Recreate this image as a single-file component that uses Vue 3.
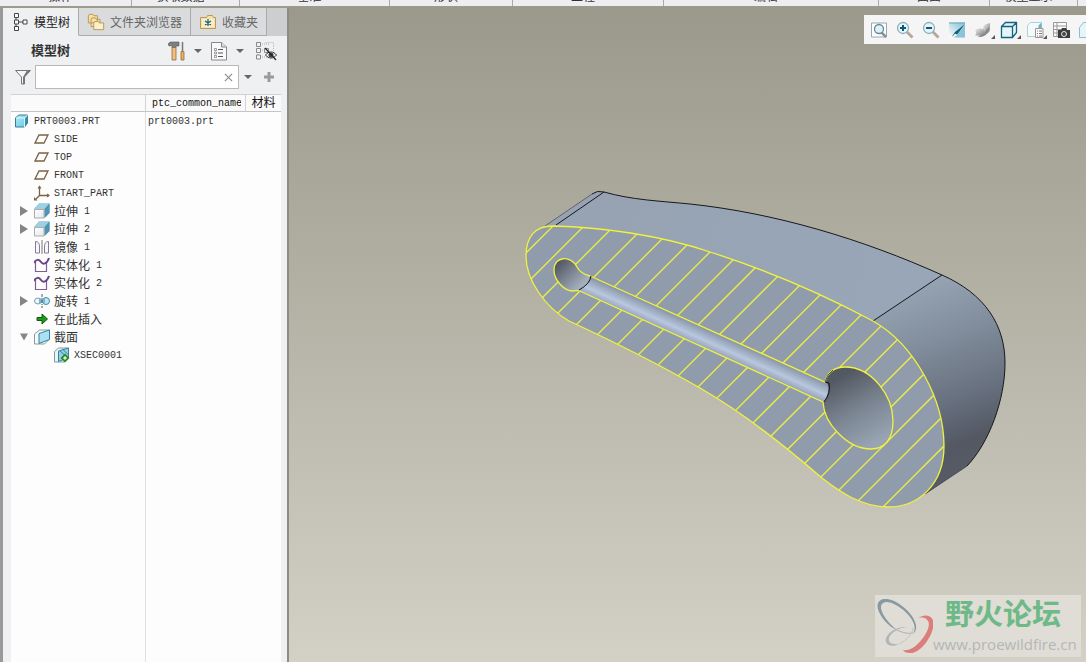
<template>
  <div class="app">
    <!-- Shared icon sprite -->
    <svg class="sprite" width="0" height="0" aria-hidden="true">
      <defs>
        <linearGradient id="g-cube" x1="0" y1="0" x2="1" y2="1">
          <stop offset="0" stop-color="#b4ecfa" />
          <stop offset="1" stop-color="#63c6e4" />
        </linearGradient>
        <linearGradient id="g-face" x1="0" y1="0" x2="1" y2="1">
          <stop offset="0" stop-color="#ffffff" />
          <stop offset="1" stop-color="#dfe9ee" />
        </linearGradient>
        <linearGradient id="g-steel" x1="0" y1="0" x2="1" y2="1">
          <stop offset="0" stop-color="#f2f2f2" />
          <stop offset="1" stop-color="#777777" />
        </linearGradient>
        <linearGradient id="g-repaint" x1="0" y1="1" x2="1" y2="0">
          <stop offset="0" stop-color="#ffffff" />
          <stop offset="1" stop-color="#7fbdd3" />
        </linearGradient>
      </defs>
      <symbol id="i-part" viewBox="0 0 16 16">
        <path d="M1.500 5l3-3h9v8l-3 4h-9z" fill="url(#g-cube)" stroke="#3d7c94" />
        <path d="M2 5h8.500v9M10.500 5l3-3" fill="none" stroke="#d9f6ff" />
        <path d="M11 5.500L13.500 3v7L11 13.500z" fill="#348cab" />
      </symbol>
      <symbol id="i-plane" viewBox="0 0 16 16">
        <path d="M5 4h9l-4 8H1z" fill="none" stroke="#7a6242" stroke-width="1.300" />
      </symbol>
      <symbol id="i-csys" viewBox="0 0 16 16">
        <path d="M5.500 1v9.500H15M5.500 10.500l-4 4" fill="none" stroke="#7a6242" stroke-width="1.300" />
        <path d="M3.500 3.500l2-3 2 3zM13 8.500l3 2-3 2zM0 12v3.500h3.500z" fill="#7a6242" />
      </symbol>
      <symbol id="i-extrude" viewBox="0 0 16 16">
        <path d="M0 6l5-5.500h10.500v9.500L10.500 15V6z" fill="#65aecb" />
        <path d="M0 6l5-5.500h10.500L10.500 6z" fill="#9ed0e3" />
        <path d="M10.500 6l5-5.500v9.500l-5 5z" fill="#4f94b3" />
        <path d="M.5 6.500H10v8.500H.5z" fill="url(#g-face)" stroke="#b4a8a4" />
      </symbol>
      <symbol id="i-mirror" viewBox="0 0 16 16">
        <path d="M1.500 2.500c3 0 4 2 4 5.500v6h-4zM14.500 2.500c-3 0-4 2-4 5.500v6h4z" fill="#faf7fc" stroke="#8b789d" />
        <path d="M8 1v14" stroke="#777" />
      </symbol>
      <symbol id="i-solid" viewBox="0 0 16 16">
        <path d="M1.500 5v9.500h11V5" fill="none" stroke="#7e5e94" stroke-width="1.200" />
        <path d="M0 6c2-4 5-4 7-1s6 2 8-4" fill="none" stroke="#69438a" stroke-width="2" />
      </symbol>
      <symbol id="i-revolve" viewBox="0 0 16 16">
        <ellipse cx="4" cy="8" rx="3.500" ry="3" fill="#e9f6fb" stroke="#819ca8" />
        <ellipse cx="12" cy="8" rx="3.500" ry="3.500" fill="#bfe6f4" stroke="#3f8aa8" />
        <path d="M5 6h6v4H5z" fill="#75b7d0" />
        <path d="M8 1v14" stroke="#555" stroke-dasharray="3 1 1 1" />
      </symbol>
      <symbol id="i-insert" viewBox="0 0 16 16">
        <path d="M3 6.500h5V3l5.500 5L8 13V9.500H3z" fill="#1c9a16" stroke="#0c5c0b" />
      </symbol>
      <symbol id="i-section" viewBox="0 0 16 16">
        <path d="M.5 5l5-4h10v9l-5 5H.5z" fill="#f6f9fa" stroke="#8d9ca3" />
        <path d="M5 4.500l10.500-3.500v9.500L5 14.500z" fill="#a9e1f3" stroke="#39809d" />
      </symbol>
      <symbol id="i-xsec" viewBox="0 0 16 16">
        <path d="M.5 4.500l4-3.500h10v9l-4 5H.5z" fill="#eaf5f8" stroke="#7f9ba7" />
        <path d="M4.500 4l10-3v9.500l-10 4z" fill="#8fd2e8" stroke="#3d7f98" />
        <path d="M6 4l7 6M9 2.500l5 5" stroke="#3d7f98" />
        <path d="M11 6.500l4.500 4.500-4.500 4.500L6.500 11z" fill="#2a8a2a" />
        <path d="M11 9l2 2-2 2-2-2z" fill="#e3f3cf" />
      </symbol>
      <symbol id="i-tree" viewBox="0 0 16 20">
        <path d="M4 5v10M6 10h5" stroke="#444" />
        <path d="M2.500 1.500h4v4h-4zM2.500 8h4v4h-4zM2.500 14.500h4v4h-4zM11 8h4v4h-4z" fill="#fff" stroke="#444" />
      </symbol>
      <symbol id="i-folders" viewBox="0 0 20 20">
        <path d="M1.500 3.500l1-2h4l1 1.500h4v8h-10zM4.500 7.500l1-2h4l1 1.500h4v8h-10z" fill="#f8dfa4" stroke="#b3944f" />
        <path d="M7.500 11.500l1-2h4l1 1.500h5v7.500h-11z" fill="#fdefcb" stroke="#b3944f" />
      </symbol>
      <symbol id="i-fav" viewBox="0 0 18 18">
        <path d="M1.500 4.500h6l1-2h5l1 2h2v11h-15z" fill="#f8e0a6" stroke="#b79a59" />
        <path d="M3 6h12v8H3z" fill="#fbedc9" />
        <path d="M9 6v7M6 8l6 4M12 8l-6 4" stroke="#13647c" stroke-width="1.300" />
      </symbol>
      <symbol id="i-tools" viewBox="0 0 18 20">
        <path d="M0 3l2-2h9v4H8v2H4V4.500L1 5z" fill="#7b8084" stroke="#54585b" stroke-width=".6" />
        <path d="M4 6.500h4V19H4z" fill="#edbf82" stroke="#9a6b32" stroke-width=".8" />
        <path d="M14.500 1v9" stroke="#777" stroke-width="1.500" />
        <path d="M13 10.500h3V19h-3z" fill="#e6b06a" stroke="#9a6b32" stroke-width=".8" />
      </symbol>
      <symbol id="i-list" viewBox="0 0 18 20">
        <path d="M1.500 1.500h10l5 4.500v13h-15z" fill="#fafafa" stroke="#888" />
        <path d="M11.500 1.500V6h5" fill="#ddd" stroke="#888" />
        <path d="M8 8.500h5M8 12h5M8 15.500h5" stroke="#555" />
        <path d="M4.500 7.500h2v2h-2zM4.500 11h2v2h-2zM4.500 14.500h2v2h-2z" fill="none" stroke="#777" stroke-width=".7" />
      </symbol>
      <symbol id="i-hide" viewBox="0 0 22 20">
        <path d="M5 3h9M5 9h9M5 16h9M3 3v13" stroke="#aaa" stroke-dasharray="1 1" />
        <path d="M1.500 1.500h4v4h-4zM1.500 7.500h4v4h-4zM1.500 14h4v4h-4zM9.500 7.500h4v4h-4z" fill="#f3f3f3" stroke="#888" />
        <path d="M10.500 1.500h8v4M18.500 5v7" fill="none" stroke="#bbb" stroke-dasharray="1 1" />
        <path d="M10.500 14c3-4 8-4 11 0-3 4-8 4-11 0z" fill="#eee" stroke="#333" />
        <circle cx="16" cy="14" r="2.500" fill="#444" />
        <path d="M10 7l11 12" stroke="#222" stroke-width="1.200" />
      </symbol>
      <symbol id="i-funnel" viewBox="0 0 18 16">
        <path d="M1.500 1.500h15L10.500 8v7h-3V8z" fill="#f7f7f7" stroke="#777" />
        <path d="M10.500 8l6-6.500H13L9 8v7h1.500z" fill="#777" />
      </symbol>
      <symbol id="v-refit" viewBox="0 0 18 18">
        <path d="M1.500 2h15v14h-15z" fill="#fff" stroke="#9aa8ae" />
        <path d="M11 11l5 5" stroke="#8b9194" stroke-width="2.500" />
        <circle cx="9" cy="8" r="4.500" fill="#dff1f7" stroke="#5e8b9c" stroke-width="1.300" />
      </symbol>
      <symbol id="v-zoomin" viewBox="0 0 18 18">
        <path d="M10.500 10.500l6 6" stroke="#b3a89c" stroke-width="2.800" />
        <circle cx="7" cy="7" r="5.500" fill="#e5f5fa" stroke="#8fb0bc" stroke-width="1.300" />
        <path d="M4 7h6M7 4v6" stroke="#0d5876" stroke-width="2" />
      </symbol>
      <symbol id="v-zoomout" viewBox="0 0 18 18">
        <path d="M10.500 10.500l6 6" stroke="#b3a89c" stroke-width="2.800" />
        <circle cx="7" cy="7" r="5.500" fill="#e5f5fa" stroke="#8fb0bc" stroke-width="1.300" />
        <path d="M4 7h6" stroke="#0d5876" stroke-width="2" />
      </symbol>
      <symbol id="v-repaint" viewBox="0 0 18 18">
        <path d="M1 1.500h16v15H1z" fill="url(#g-repaint)" />
        <path d="M1 2h16" stroke="#6ba7bf" />
        <path d="M6 16.500l11-11v11z" fill="#8cc3d8" />
        <path d="M4 15.500l3-4.500 9.500-7.500-6.500 9z" fill="#145f7d" />
        <path d="M4 16.500l3-4 2 2z" fill="#eef6f9" />
      </symbol>
      <symbol id="v-shade" viewBox="0 0 18 18">
        <path d="M9 8c0-3 2-5 7-6v6c0 4-4 5-6 6z" fill="url(#g-steel)" />
        <path d="M1 9c3-2 7-2 9 0s0 6-3 6c-3-1-6 0-6-1 2-1 1-3 0-5z" fill="url(#g-steel)" />
        <path d="M3 15c4 0 8-2 9-6l3-3c0 6-4 10-9 10z" fill="#888" />
      </symbol>
      <symbol id="v-box" viewBox="0 0 18 18">
        <path d="M1.500 5.500l4-4h11v10l-4 5h-11zM1.500 5.500h11v11M12.500 5.500l4-4" fill="#e5f6fb" stroke="#17637f" stroke-width="1.300" />
      </symbol>
      <symbol id="v-saved" viewBox="0 0 18 18">
        <path d="M1.500 4.500l3-3h11v11l-3 3h-11z" fill="#f3fafc" stroke="#b5ced6" />
        <path d="M12.500 4.500l3-3v8h-3z" fill="#63b4cf" />
        <path d="M9.500 7.500h7.500v9H9.500z" fill="#fff" stroke="#9a958c" />
        <path d="M11 10h1M13 10h3M11 12.500h1M13 12.500h3M11 15h1M13 15h3" stroke="#777" />
      </symbol>
      <symbol id="v-manager" viewBox="0 0 18 18">
        <path d="M1.500 1.500h13v14h-13zM1.500 5h13M1.500 8.500h13M1.500 12h13M5 1.500v14" fill="#fafafa" stroke="#999" />
        <path d="M6 9h3l1-2h4l1 2h3v8H6z" fill="#3d3d3d" />
        <circle cx="12" cy="13" r="2.500" fill="#444" stroke="#e8e8e8" />
      </symbol>
      <symbol id="v-display" viewBox="0 0 18 18">
        <path d="M1.500 6.500l4-5h12v10l-4 5h-12z" fill="#e6f5fa" stroke="#8fbccb" />
      </symbol>
    </svg>

    <!-- Ribbon group captions -->
    <header class="ribbon">
      <span v-for="group in ribbonGroups" :key="group" class="ribbon-group">
        <span>{{ group }}</span>
      </span>
      <span></span>
    </header>

    <main class="workspace">
      <aside class="navigator">
        <nav class="tabs">
          <button
            v-for="tab in tabs"
            :key="tab.label"
            type="button"
            class="tab"
            :class="{ active: tab.label === activeTab }"
            @click="activeTab = tab.label"
          >
            <svg class="tab-icon"><use :href="'#' + tab.icon" /></svg>
            <span>{{ tab.label }}</span>
          </button>
        </nav>

        <div class="panel-header">
          <h1>模型树</h1>
          <button type="button" class="tool" aria-label="设置">
            <svg class="tool-icon"><use href="#i-tools" /></svg>
            <span class="caret"></span>
          </button>
          <button type="button" class="tool" aria-label="显示">
            <svg class="tool-icon"><use href="#i-list" /></svg>
            <span class="caret"></span>
          </button>
          <button type="button" class="tool" aria-label="隐藏">
            <svg class="hide-icon"><use href="#i-hide" /></svg>
          </button>
        </div>

        <div class="search-row">
          <svg class="funnel"><use href="#i-funnel" /></svg>
          <div class="search-box">
            <input v-model="query" type="text" aria-label="搜索模型树" />
            <button type="button" class="clear" aria-label="清除" @click="query = ''">
              <svg viewBox="0 0 10 10"><path d="M1 1l8 8M9 1L1 9" stroke="#8c8c8c" stroke-width="1.300" /></svg>
            </button>
          </div>
          <button type="button" class="plain" aria-label="搜索选项"><span class="caret"></span></button>
          <button type="button" class="plain" aria-label="添加">
            <svg class="plus" viewBox="0 0 12 12"><path d="M6 1v10M1 6h10" stroke="#9a9a9a" stroke-width="3" /></svg>
          </button>
        </div>

        <div class="tree-wrap">
          <table class="tree">
            <colgroup>
              <col class="col-tree" />
              <col class="col-name" />
              <col class="col-material" />
            </colgroup>
            <thead>
              <tr>
                <th></th>
                <th class="head-name"><div class="latin">ptc_common_name</div></th>
                <th class="head-material">材料</th>
              </tr>
            </thead>
            <tbody>
              <tr v-for="row in rows" :key="row.text + row.num">
                <td>
                  <div class="node" :class="'level-' + row.level">
                    <button
                      v-if="row.toggle"
                      type="button"
                      class="toggle"
                      :class="row.toggle"
                      :aria-label="row.text"
                    ></button>
                    <svg class="node-icon"><use :href="'#i-' + row.icon" /></svg>
                    <span :class="{ latin: row.latin }">{{ row.text }}</span>
                    <span v-if="row.num" class="latin num">{{ row.num }}</span>
                  </div>
                </td>
                <td class="latin value">{{ row.name }}</td>
                <td></td>
              </tr>
              <tr class="filler">
                <td></td>
                <td></td>
                <td></td>
              </tr>
            </tbody>
          </table>
        </div>
      </aside>

      <section class="viewport">
        <svg class="model" viewBox="289 7 797 655" preserveAspectRatio="xMinYMin meet">
          <defs>
            <linearGradient id="g-top" gradientUnits="userSpaceOnUse" x1="600" y1="200" x2="900" y2="300">
              <stop offset="0" stop-color="#97a3b3" />
              <stop offset="1" stop-color="#98a6b7" />
            </linearGradient>
            <linearGradient id="g-end" gradientUnits="userSpaceOnUse" x1="915" y1="290" x2="980" y2="455">
              <stop offset="0" stop-color="#94a2b2" />
              <stop offset=".3" stop-color="#828e9d" />
              <stop offset=".65" stop-color="#687180" />
              <stop offset=".9" stop-color="#535863" />
              <stop offset="1" stop-color="#555a64" />
            </linearGradient>
            <linearGradient id="g-rod" gradientUnits="userSpaceOnUse" x1="700" y1="325" x2="691" y2="345">
              <stop offset="0" stop-color="#8491a3" />
              <stop offset=".55" stop-color="#b9c7df" />
              <stop offset="1" stop-color="#8895a9" />
            </linearGradient>
            <linearGradient id="g-hole" gradientUnits="userSpaceOnUse" x1="838" y1="378" x2="875" y2="445">
              <stop offset="0" stop-color="#535962" />
              <stop offset=".5" stop-color="#7b8592" />
              <stop offset="1" stop-color="#99a5b5" />
            </linearGradient>
            <linearGradient id="g-small" gradientUnits="userSpaceOnUse" x1="558" y1="261" x2="582" y2="284">
              <stop offset="0" stop-color="#50555f" />
              <stop offset="1" stop-color="#a3aebd" />
            </linearGradient>
            <clipPath id="c-section">
              <path :d="sectionPath + pocketPath" clip-rule="evenodd" />
            </clipPath>
          </defs>

          <!-- Extruded body behind the section face -->
          <path
            d="M545 227L592 194Q597 190 604 192C632 200 660 201 690 204C775 213 862 239 942 275L873 322L800 310L640 260z"
            fill="url(#g-top)"
          />
          <path
            d="M942 275C985 294 1005 325 1005 363C1005 400 989 443 967 466L925 494L850 480L873 321z"
            fill="url(#g-end)"
          />
          <path
            d="M592 194Q597 190 604 192C632 200 660 201 690 204C775 213 862 239 942 275C985 294 1005 325 1005 363C1005 400 989 443 967 466M556 225L604 192M873 321L942 275"
            fill="none"
            stroke="#15181c"
          />
          <path d="M545 226L592 194" stroke="#5c6470" />
          <path d="M967 466L925 494" stroke="#484c55" />

          <!-- Section face, pockets and hatching -->
          <path :d="sectionPath" fill="#909cab" />
          <path :d="holePath" fill="url(#g-hole)" />
          <path d="M590 276L826 382Q832 388 824 402L579 291z" fill="url(#g-rod)" />
          <path :d="smallPath" fill="url(#g-small)" />
          <g clip-path="url(#c-section)" stroke="#ecee42" stroke-width="1.300">
            <line
              v-for="sum in hatchSums"
              :key="sum"
              :x1="sum - 180"
              y1="180"
              :x2="sum - 520"
              y2="520"
            />
          </g>
          <path :d="sectionPath + pocketPath" fill="none" stroke="#f0f23c" stroke-width="1.300" />
          <path d="M591 276Q590 284 579 290M825 382L829 383Q831 393 824 402" fill="none" stroke="#111" />
          <path d="M825 382Q827 374 833 370" fill="none" stroke="#55572c" />
        </svg>

        <div class="view-tools">
          <button
            v-for="tool in viewTools"
            :key="tool.icon"
            type="button"
            class="view-tool"
            :class="{ more: tool.more }"
            :aria-label="tool.label"
          >
            <svg><use :href="'#v-' + tool.icon" /></svg>
          </button>
        </div>

        <div class="watermark">
          <svg class="logo" viewBox="0 0 58 62">
            <path d="M22 35C12 31 2 18 2.500 10C4 1 17 3 27 11C38 19 46 33 38 39C43 31 36 21 27 14C18 7 8 4 6 11C5 17 13 28 22 35z" fill="#8999a3" />
            <path d="M22 35C28 38 34 39 38 38" fill="none" stroke="#a9b1b4" />
            <path d="M43 23C52 17 61 22 58 33C55 46 43 59 35 58C31 58 29 57 28 55C38 57 49 44 53 34C56 26 51 21 43 23z" fill="#da7d7b" />
            <path d="M32 32C20 31 9 40 11 47C12 51 19 52 24 49C16 50 13 47 14 43C16 37 24 33 32 32z" fill="#b1b6b5" />
            <path d="M24 49C32 45 38 38 38 33" fill="none" stroke="#c3c5c1" />
          </svg>
          <div class="watermark-text">
            <strong>野火论坛</strong>
            <span>www.proewildfire.cn</span>
          </div>
        </div>
      </section>
    </main>
  </div>
</template>

<script setup>
import { ref } from 'vue'

const ribbonGroups = ['操作', '获取数据', '基准', '形状', '工程', '编辑', '曲面', '模型显示']

const tabs = [
  { label: '模型树', icon: 'i-tree' },
  { label: '文件夹浏览器', icon: 'i-folders' },
  { label: '收藏夹', icon: 'i-fav' },
]
const activeTab = ref('模型树')
const query = ref('')

// Model tree, already flattened for display
const rows = [
  { level: 0, icon: 'part', text: 'PRT0003.PRT', latin: true, name: 'prt0003.prt' },
  { level: 1, icon: 'plane', text: 'SIDE', latin: true },
  { level: 1, icon: 'plane', text: 'TOP', latin: true },
  { level: 1, icon: 'plane', text: 'FRONT', latin: true },
  { level: 1, icon: 'csys', text: 'START_PART', latin: true },
  { level: 1, icon: 'extrude', text: '拉伸', num: 1, toggle: 'closed' },
  { level: 1, icon: 'extrude', text: '拉伸', num: 2, toggle: 'closed' },
  { level: 1, icon: 'mirror', text: '镜像', num: 1 },
  { level: 1, icon: 'solid', text: '实体化', num: 1 },
  { level: 1, icon: 'solid', text: '实体化', num: 2 },
  { level: 1, icon: 'revolve', text: '旋转', num: 1, toggle: 'closed' },
  { level: 1, icon: 'insert', text: '在此插入' },
  { level: 1, icon: 'section', text: '截面', toggle: 'open' },
  { level: 2, icon: 'xsec', text: 'XSEC0001', latin: true },
]

const viewTools = [
  { icon: 'refit', label: '重新调整' },
  { icon: 'zoomin', label: '放大' },
  { icon: 'zoomout', label: '缩小' },
  { icon: 'repaint', label: '重画' },
  { icon: 'shade', label: '渲染', more: true },
  { icon: 'box', label: '显示样式', more: true },
  { icon: 'saved', label: '已保存方向', more: true },
  { icon: 'manager', label: '视图管理器' },
  { icon: 'display', label: '基准显示' },
]

const sectionPath =
  'M553 226C600 227 660 235 710 252C770 271 830 298 873 321C915 345 944 400 944 446' +
  'C944 485 918 507 888 507C862 507 840 492 822 478C785 446 742 412 700 388' +
  'C660 365 610 340 569 321C545 307 526 280 526 256C526 238 534 226 553 226z'
const holePath =
  'M825 382C828 371 835 367 845 367C872 367 893 396 893 421C893 439 885 449 871 449' +
  'C848 449 824 424 823 402z'
const smallPath =
  'M590 276C582 274 579 271 577 267C571 255 554 256 554 270C554 280 564 291 573 291L579 290Q589 284 590 276z'
// Both bores and the rod channel as one opening
const pocketPath =
  'M590 276L825 382C828 371 835 367 845 367C872 367 893 396 893 421C893 439 885 449 871 449' +
  'C848 449 824 424 823 402L582 292Q578 290 573 291C564 291 554 280 554 270C554 256 571 255 577 267C579 271 582 274 590 276z'

// 45 degree hatch: every line keeps x + y constant
const hatchSums = Array.from({ length: 21 }, (_, i) => Math.round(1390 - i * 30.55))
</script>

<style>
html,
body {
  margin: 0;
  overflow: hidden;
}
</style>

<style scoped>
.app {
  display: flex;
  flex-direction: column;
  height: 100vh;
  font-family: "Liberation Sans", "Noto Sans CJK SC", sans-serif;
  font-size: 12px;
  color: #333;
  background: #9b9b90;
}

.sprite {
  position: absolute;
}

button {
  padding: 0;
  border: 0;
  background: none;
  font: inherit;
  color: inherit;
}

.latin {
  font-family: "Liberation Mono", monospace;
  font-size: 10px;
}

/* Ribbon */
.ribbon {
  display: grid;
  grid-template-columns: 132fr 108fr 150fr 123fr 151fr 215fr 111fr 88fr 8fr;
  height: 6px;
  flex: none;
  overflow: hidden;
  background: #eeeef0;
}

.ribbon-group {
  display: flex;
  align-items: flex-end;
  justify-content: center;
  height: 6px;
  padding-right: 10px;
  border-right: 1px solid #a9a9ac;
  line-height: 18px;
  box-sizing: border-box;
  white-space: nowrap;
}

.workspace {
  display: flex;
  flex: 1;
  min-height: 0;
}

/* Navigator */
.navigator {
  display: flex;
  flex-direction: column;
  flex: none;
  width: 284px;
  margin-top: 2px;
  border-left: 3px solid #99999b;
  border-right: 2px solid #8c8c86;
  background: #eff0f2;
}

.tabs {
  display: flex;
  height: 28px;
  background: #cdced0;
}

.tab {
  display: flex;
  align-items: center;
  gap: 5px;
  padding: 0 8px;
  border-right: 1px solid #aaabad;
  border-bottom: 1px solid #aaabad;
  background: #dadbdd;
  color: #666;
}

.tab.active {
  border-bottom-color: #eff0f2;
  background: #eff0f2;
  color: #222;
}

.tab-icon {
  width: 18px;
  height: 20px;
}

.panel-header {
  display: flex;
  align-items: center;
  height: 29px;
  padding: 0 10px 0 28px;
}

.panel-header h1 {
  flex: 1;
  margin: 0;
  font-size: 13px;
  line-height: 20px;
  font-weight: bold;
}

.tool {
  display: flex;
  align-items: center;
  gap: 8px;
  margin-right: 8px;
}

.tool:last-child {
  margin: 0 0 0 3px;
}

.tool-icon {
  width: 18px;
  height: 20px;
}

.hide-icon {
  width: 22px;
  height: 20px;
}

.caret {
  width: 0;
  height: 0;
  border: 4px solid transparent;
  border-top-color: #666;
  border-bottom: 0;
}

.search-row {
  display: flex;
  align-items: center;
  height: 24px;
  padding: 0 12px 0 11px;
}

.funnel {
  width: 18px;
  height: 16px;
  margin-right: 3px;
}

.search-box {
  display: flex;
  align-items: center;
  flex: 1;
  height: 22px;
  margin-right: 5px;
  border: 1px solid #b9b9ba;
  background: #fff;
}

.search-box input {
  flex: 1;
  min-width: 0;
  padding: 0 4px;
  border: 0;
  outline: 0;
  background: none;
  font: inherit;
}

.clear {
  display: flex;
  margin-right: 5px;
}

.clear svg {
  width: 9px;
  height: 9px;
}

.plain {
  display: flex;
  margin-right: 11px;
}

.plain:last-child {
  margin-right: 0;
}

.plus {
  width: 12px;
  height: 12px;
}

/* Model tree table */
.tree-wrap {
  flex: 1;
  min-height: 0;
  margin: 5px 6px 0 8px;
  background: #fdfdfd;
}

.tree {
  width: 100%;
  height: 100%;
  table-layout: fixed;
  border-collapse: separate;
  border-spacing: 0;
}

.col-tree {
  width: 135px;
}

.col-name {
  width: 100px;
}

.tree tr {
  height: 18px;
}

.tree tr.filler {
  height: auto;
}

.tree th {
  height: 18px;
  padding: 0;
  box-sizing: border-box;
  border-top: 1px solid #d2d2d2;
  border-bottom: 1px solid #c4c4c4;
  border-right: 1px solid #d2d2d2;
  background: #fafafa;
  color: #111;
  font-weight: normal;
  line-height: 16px;
}

.tree th:last-child {
  border-right: 0;
}

.tree .head-name {
  padding: 2px 4px 0 6px;
}

.head-name div {
  overflow: hidden;
  line-height: 14px;
  text-align: left;
}

.tree td {
  padding: 0;
  line-height: 16px;
}

.tree td:first-child {
  border-right: 1px solid #e0e0e0;
}

.tree .value {
  padding: 2px 0 0 2px;
}

.node {
  display: flex;
  align-items: center;
  height: 18px;
  white-space: nowrap;
}

.node span {
  padding-top: 2px;
}

.level-0 {
  padding-left: 3px;
}

.level-1 {
  padding-left: 23px;
}

.level-2 {
  padding-left: 43px;
}

.node-icon {
  width: 16px;
  height: 16px;
  margin-right: 4px;
}

.num {
  margin-left: 6px;
}

.toggle {
  width: 8px;
  height: 10px;
  margin-left: -14px;
  margin-right: 6px;
  background: #858585;
}

.toggle.closed {
  clip-path: polygon(0 0, 100% 50%, 0 100%);
}

.toggle.open {
  clip-path: polygon(0 15%, 100% 15%, 50% 85%);
}

/* Graphics area */
.viewport {
  position: relative;
  flex: 1;
  min-width: 0;
  margin-top: 1px;
  background: linear-gradient(#9a998b, #d3d0c5);
  overflow: hidden;
}

.model {
  display: block;
  width: 100%;
  height: 100%;
}

.view-tools {
  position: absolute;
  top: 8px;
  right: 0;
  display: flex;
  gap: 8px;
  width: 216px;
  height: 29px;
  padding-left: 6px;
  overflow: hidden;
  background: #f5f5f5;
}

.view-tool {
  display: flex;
  align-items: center;
  flex: none;
  position: relative;
}

.view-tool svg {
  width: 18px;
  height: 18px;
}

.view-tool.more::after {
  content: "";
  position: absolute;
  right: -3px;
  bottom: 5px;
  border-left: 4px solid transparent;
  border-bottom: 4px solid #555;
}

.watermark {
  position: absolute;
  right: 5px;
  bottom: 5px;
  display: flex;
  width: 206px;
  height: 62px;
  background: #dfddd5;
}

.logo {
  width: 58px;
  height: 62px;
}

.watermark-text {
  display: flex;
  flex-direction: column;
  white-space: nowrap;
}

.watermark-text strong {
  padding-left: 12px;
  font-size: 29px;
  line-height: 40px;
  color: #6eb987;
}

.watermark-text span {
  font-family: "Open Sans", sans-serif;
  font-size: 15px;
  line-height: 18px;
  color: #b3b7b6;
}
</style>
